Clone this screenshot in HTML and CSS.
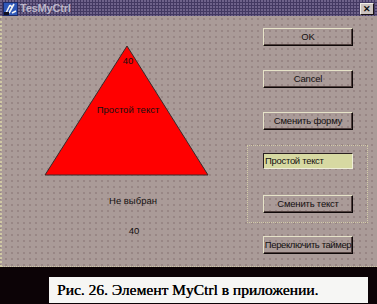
FILE: index.html
```html
<!DOCTYPE html>
<html>
<head>
<meta charset="utf-8">
<link rel="stylesheet" href="styles.css">
</head>
<body>
<div class="window">
  <div class="titlebar">
    <svg class="appicon" width="15" height="14" viewBox="0 0 15 14">
      <rect x="0" y="0" width="15" height="14" fill="#1c2a6a"/>
      <rect x="1" y="1" width="13" height="12" fill="#2f58b8"/>
      <path d="M3 11 L7 3 M7 3 L9 5 M6 11 L11 2 M9 11 L13 9" stroke="#f4f4f4" stroke-width="1.6" fill="none"/>
      <rect x="1" y="10" width="5" height="3" fill="#101020"/>
    </svg>
    <span class="title">TesMyCtrl</span>
    <span class="spacer"></span>
    <span class="closebtn">✕</span>
  </div>
  <div class="client">
    <div class="leftcol">
      <div class="shape">
        <svg width="165" height="131" viewBox="0 0 165 131">
          <polygon points="83,1 1,130 164,130" fill="#ff0000" stroke="#3a2a2a" stroke-width="1"/>
        </svg>
        <span class="shape-num">40</span>
        <span class="shape-text">Простой текст</span>
      </div>
      <div class="status">Не выбран</div>
      <div class="counter">40</div>
    </div>
    <div class="rightcol">
      <div class="btn">OK</div>
      <div class="btn gap">Cancel</div>
      <div class="btn gap">Сменить форму</div>
      <div class="group">
        <div class="edit">Простой текст</div>
        <div class="btn gbtn">Сменить текст</div>
      </div>
      <div class="btn timer">Переключить таймер</div>
    </div>
  </div>
</div>
<div class="footer">
  <div class="caption">Рис. 26. Элемент MyCtrl в приложении.</div>
</div>
</body>
</html>
```
FILE: styles.css
```css
html, body {
  margin: 0;
  padding: 0;
  background: #0c0306;
}
body {
  width: 377px;
  height: 304px;
  overflow: hidden;
  font-family: "Liberation Sans", Arial, sans-serif;
}
.window {
  width: 377px;
  height: 267px;
  display: flex;
  flex-direction: column;
  background-color: #aa9b98;
}
.titlebar {
  height: 16px;
  display: flex;
  align-items: center;
  padding: 0 3px 0 3px;
  background-color: #433962;
  background-image: radial-gradient(circle at 1px 1px, #6e628a 0.8px, transparent 1px);
  background-size: 3px 3px;
}
.appicon {
  display: block;
  margin-top: 1px;
}
.title {
  margin-left: 2px;
  font-size: 11px;
  font-weight: bold;
  color: #beb6c8;
  letter-spacing: -0.2px;
}
.spacer { flex: 1; }
.closebtn {
  width: 12px;
  height: 10px;
  margin-top: 1px;
  background: #cbc2bf;
  border: 1px solid;
  border-color: #f2efe6 #1a1212 #1a1212 #f2efe6;
  font-size: 9px;
  font-weight: bold;
  line-height: 10px;
  text-align: center;
  color: #111;
}
.client {
  flex: 1;
  display: flex;
  border-left: 2px dotted #cfc8a4;
  border-bottom: 1px dotted #cfc8a4;
  background-image: radial-gradient(circle at 1px 1px, #846f6e 0.6px, transparent 0.8px);
  background-size: 6px 6px;
  background-position: 3px 2px;
  font-size: 9.5px;
  color: #141010;
}
.leftcol {
  width: 245px;
  display: flex;
  flex-direction: column;
}
.shape {
  position: relative;
  width: 165px;
  height: 131px;
  margin: 29px 0 0 42px;
}
.shape svg { display: block; }
.shape-num {
  position: absolute;
  left: 0;
  width: 168px;
  top: 10px;
  text-align: center;
}
.shape-text {
  position: absolute;
  left: 0;
  width: 168px;
  top: 59px;
  text-align: center;
}
.status {
  width: 262px;
  text-align: center;
  margin-top: 19px;
}
.counter {
  width: 264px;
  text-align: center;
  margin-top: 19px;
}
.rightcol {
  width: 121px;
  display: flex;
  flex-direction: column;
  padding-top: 12px;
}
.btn {
  width: 88px;
  height: 16px;
  margin-left: 16px;
  border: 1px solid;
  border-color: #e6e3c8 #0e0808 #0e0808 #e6e3c8;
  box-shadow: inset -1px -1px 0 #4e3e3c;
  text-align: center;
  line-height: 16px;
  white-space: nowrap;
  letter-spacing: -0.2px;
}
.gap { margin-top: 24px; }
.group {
  margin-top: 15px;
  height: 76px;
  border: 1px dotted #d2cba8;
  display: flex;
  flex-direction: column;
}
.edit {
  width: 87px;
  height: 14px;
  margin: 7px 0 0 15px;
  background: #d7d9a2;
  border-top: 1px solid #2a2020;
  border-left: 1px solid #2a2020;
  border-right: 1px solid #efeed8;
  border-bottom: 1px solid #efeed8;
  line-height: 14px;
  padding-left: 1px;
  white-space: nowrap;
  letter-spacing: -0.3px;
}
.gbtn {
  margin-left: 15px;
  margin-top: 26px;
}
.timer {
  margin-top: 13px;
  letter-spacing: -0.4px;
}
.footer {
  height: 37px;
  display: flex;
  align-items: flex-end;
  padding-left: 49px;
}
.caption {
  width: 311px;
  height: 26px;
  margin-bottom: 1px;
  padding-left: 8px;
  background: #f6f6f4;
  font-family: "Liberation Serif", "Times New Roman", serif;
  font-size: 15.5px;
  line-height: 26px;
  color: #000;
  text-shadow: 0.3px 0 0 #000;
}
```
